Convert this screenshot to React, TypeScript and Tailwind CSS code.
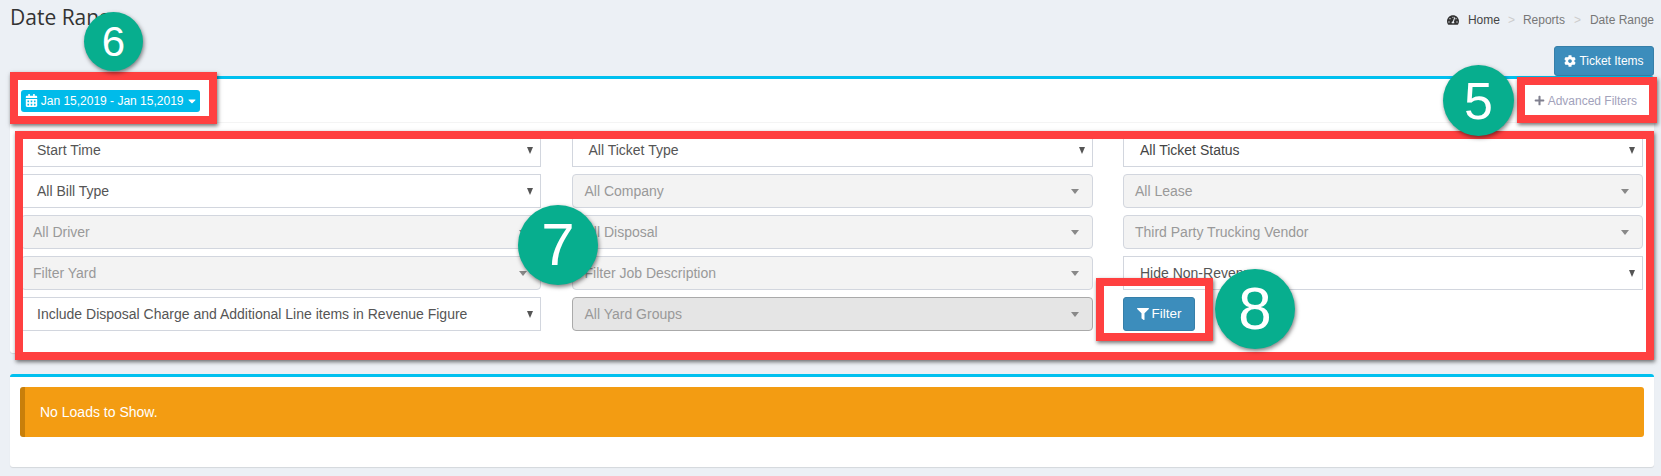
import { FaCalendarAlt, FaCaretDown, FaCog, FaFilter, FaPlus, FaTachometerAlt } from "react-icons/fa";

/* ================= SELECTS ================= */
function NativeSelect({ label, pad = "pl-[15px]", color = "text-[#555]" }: { label: string; pad?: string; color?: string }) {
  return (
    <div className={`flex h-[34px] items-center justify-between border border-[#d2d6de] bg-white pr-[7px] ${pad} ${color}`}>
      <span>{label}</span>
      <svg width="6" height="7" viewBox="0 0 6 7" className="fill-[#555]">
        <path d="M0 0h6L3 7z" />
      </svg>
    </div>
  );
}

function DisabledSelect({ label, dark = false, pad = "pl-[11px]" }: { label: string; dark?: boolean; pad?: string }) {
  return (
    <div
      className={`flex h-[34px] items-center justify-between rounded-[4px] border pr-[13px] text-[#999] ${pad} ${
        dark ? "border-[#aaa] bg-[#e5e5e5]" : "border-[#d2d6de] bg-[#f3f3f3]"
      }`}
    >
      <span>{label}</span>
      <span className="h-0 w-0 border-x-[4px] border-t-[5px] border-x-transparent border-t-[#888]" />
    </div>
  );
}

export default function App() {
  return (
    <div className="relative h-[476px] w-full overflow-hidden bg-[#ecf0f5] font-['Liberation_Sans',Arial,sans-serif] text-[14px]">
      {/* ================= HEADER ================= */}
      <div className="flex h-[46px] items-start justify-between pl-[10px] pr-[7px]">
        <h1 className="pt-[2px] font-['Open_Sans',sans-serif] text-[21px] leading-[30px] text-[#333]">Date Range</h1>
        <div className="flex items-center pt-[13px] text-[12px] leading-[14px] text-[#777]">
          <FaTachometerAlt className="mr-[9px] text-[12px] text-[#333]" />
          <span className="text-[#444]">Home</span>
          <span className="mx-[8px] text-[#ccc]">&gt;</span>
          <span>Reports</span>
          <span className="mx-[9px] text-[#ccc]">&gt;</span>
          <span>Date Range</span>
        </div>
      </div>

      <div className="flex h-[30px] justify-end pr-[7px]">
        <button className="flex w-[100px] items-center justify-center gap-[3px] rounded-[3px] border border-[#367fa9] bg-[#3c8dbc] text-[12px] text-white">
          <FaCog className="text-[12px]" />
          Ticket Items
        </button>
      </div>

      {/* ================= FILTER PANEL ================= */}
      <div className="ml-[10px] mr-[7px] h-[277px] rounded-[3px] border-t-[3px] border-[#00c0ef] bg-white shadow-[0_1px_1px_rgba(0,0,0,0.1)]">
        <div className="flex h-[44px] items-center justify-between border-b border-[#f4f4f4] pl-[11px] pr-[17px]">
          <button className="flex h-[22px] w-[179px] items-center justify-end gap-[2.5px] rounded-[3px] bg-[#00bbea] pr-[2px] text-[12px] text-white">
            <FaCalendarAlt className="text-[13px]" />
            Jan 15,2019 - Jan 15,2019
            <FaCaretDown className="text-[12px]" />
          </button>
          <div className="flex items-center gap-[3px] text-[12px] text-[#a2a2bb]">
            <FaPlus className="text-[11px] text-[#80808f]" />
            Advanced Filters
          </div>
        </div>

        <div className="grid grid-cols-[520px_521px_1fr] gap-x-[30.5px] gap-y-[7px] px-[11px] pt-[10px]">
          <NativeSelect label="Start Time" />
          <NativeSelect label="All Ticket Type" pad="pl-[16px]" />
          <NativeSelect label="All Ticket Status" pad="pl-[16px]" color="text-[#444]" />

          <NativeSelect label="All Bill Type" />
          <DisabledSelect label="All Company" pad="pl-[12px]" />
          <DisabledSelect label="All Lease" />

          <DisabledSelect label="All Driver" />
          <DisabledSelect label="All Disposal" pad="pl-[12px]" />
          <DisabledSelect label="Third Party Trucking Vendor" />

          <DisabledSelect label="Filter Yard" />
          <DisabledSelect label="Filter Job Description" pad="pl-[12px]" />
          <NativeSelect label="Hide Non-Revenue" pad="pl-[16px]" />

          <NativeSelect label="Include Disposal Charge and Additional Line items in Revenue Figure" />
          <DisabledSelect label="All Yard Groups" dark pad="pl-[12px]" />
          <div>
            <button className="flex h-[34px] w-[72px] items-center justify-center gap-[3px] rounded-[3px] border border-[#367fa9] bg-[#3c8dbc] text-[13.5px] text-white">
              <FaFilter className="text-[12px]" />
              Filter
            </button>
          </div>
        </div>
      </div>

      {/* ================= RESULT PANEL ================= */}
      <div className="ml-[10px] mr-[7px] mt-[21px] h-[93px] rounded-[3px] border-t-[3px] border-[#00c0ef] bg-white px-[10px] pt-[10px] shadow-[0_1px_1px_rgba(0,0,0,0.1)]">
        <div className="flex h-[50px] items-center rounded-[3px] border-l-[5px] border-[#c87f0a] bg-[#f39c12] pl-[15px] text-white">
          No Loads to Show.
        </div>
      </div>

      {/* ================= ANNOTATIONS ================= */}
      <div className="absolute left-[10px] top-[72px] h-[52px] w-[207px] border-[8px] border-[#ff4040] shadow-[1px_2px_4px_rgba(0,0,0,0.55)]" />
      <div className="absolute left-[1517px] top-[77px] h-[46px] w-[140px] border-[8px] border-[#ff4040] shadow-[1px_2px_4px_rgba(0,0,0,0.55)]" />
      <div className="absolute left-[15px] top-[131px] h-[229px] w-[1639px] border-[8px] border-[#ff4040] shadow-[1px_2px_4px_rgba(0,0,0,0.55)]" />
      <div className="absolute left-[1096px] top-[278px] h-[63px] w-[117px] border-[8px] border-[#ff4040] shadow-[1px_2px_4px_rgba(0,0,0,0.55)]" />

      <div className="absolute left-[84px] top-[12px] flex h-[59px] w-[59px] items-center justify-center rounded-full bg-[#07ae8e] text-[42px] text-white shadow-[1px_2px_4px_rgba(0,0,0,0.5)]">6</div>
      <div className="absolute left-[1443px] top-[65px] flex h-[71px] w-[71px] items-center justify-center rounded-full bg-[#07ae8e] text-[52px] text-white shadow-[1px_2px_4px_rgba(0,0,0,0.5)]">5</div>
      <div className="absolute left-[518px] top-[205px] flex h-[80px] w-[80px] items-center justify-center rounded-full bg-[#07ae8e] text-[60px] text-white shadow-[1px_2px_4px_rgba(0,0,0,0.5)]">7</div>
      <div className="absolute left-[1215px] top-[269px] flex h-[80px] w-[80px] items-center justify-center rounded-full bg-[#07ae8e] text-[60px] text-white shadow-[1px_2px_4px_rgba(0,0,0,0.5)]">8</div>
    </div>
  );
}
